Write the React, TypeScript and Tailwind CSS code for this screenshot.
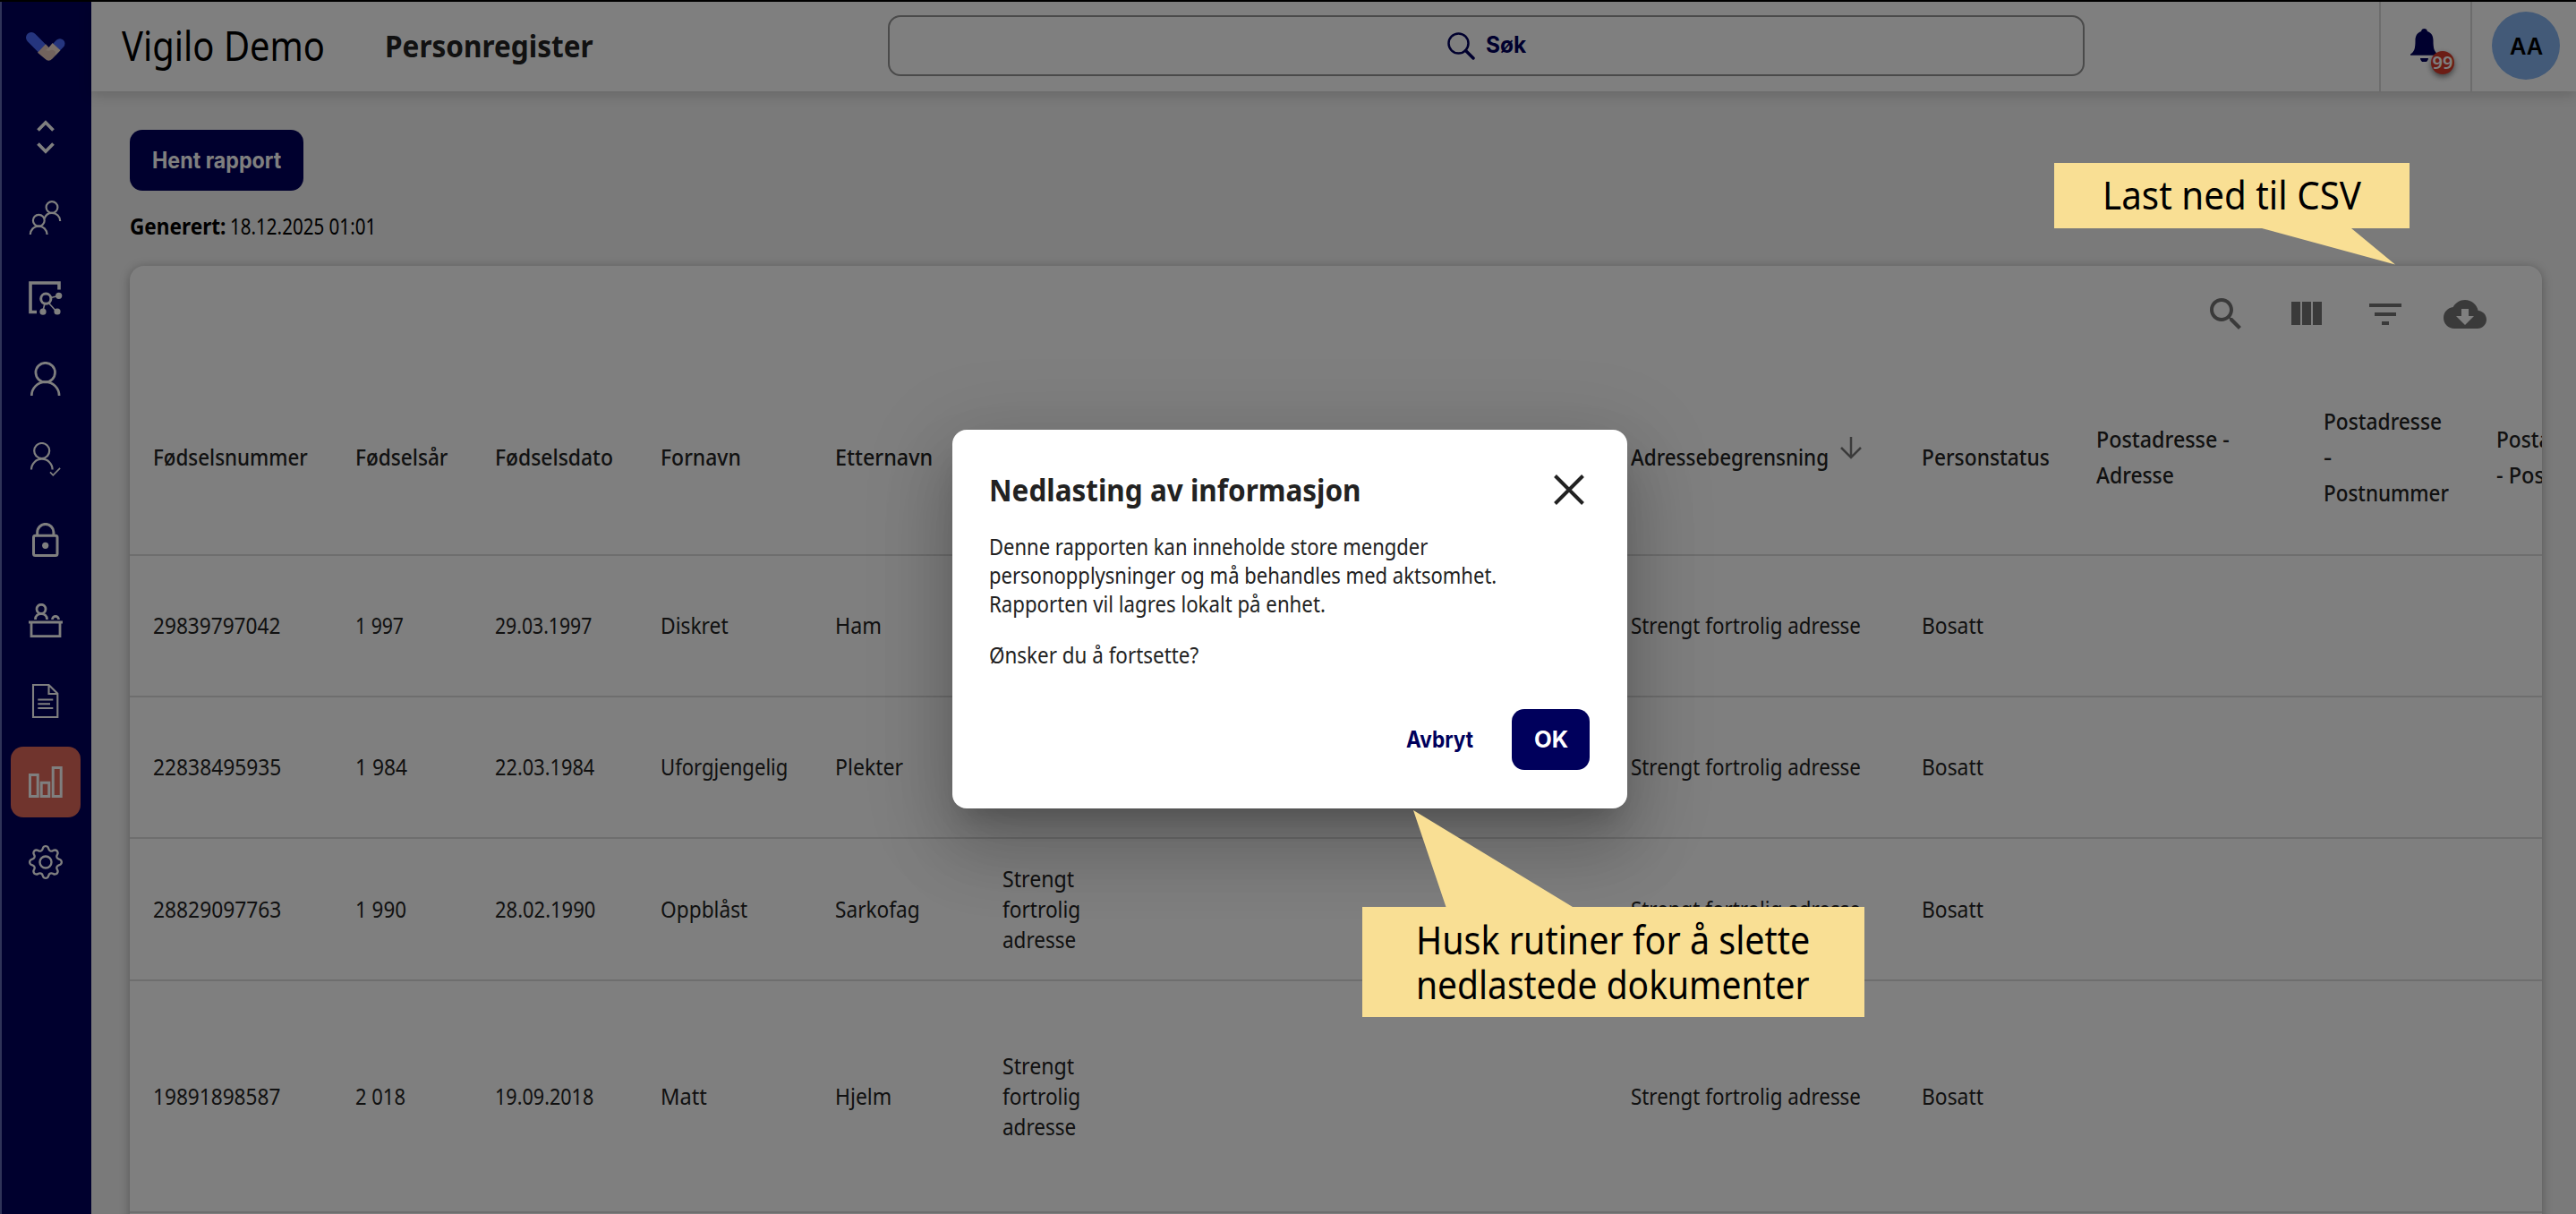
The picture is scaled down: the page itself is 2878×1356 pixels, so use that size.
import { useLayoutEffect, useRef, useState, type ReactNode } from "react";
import { BsGear } from "react-icons/bs";

/* One line of text condensed horizontally to a given width. */
function Fit({ w, className = "", children }: { w: number; className?: string; children: ReactNode }) {
  const ref = useRef<HTMLSpanElement>(null);
  const [scale, setScale] = useState(0.88);
  useLayoutEffect(() => {
    if (ref.current) setScale(w / ref.current.offsetWidth);
  }, [w]);
  return (
    <span className={"block whitespace-nowrap " + className} style={{ width: w }}>
      <span ref={ref} className="inline-block origin-left" style={{ transform: `scaleX(${scale})` }}>
        {children}
      </span>
    </span>
  );
}

function Icon({ children }: { children: ReactNode }) {
  return (
    <svg className="size-[38px]" viewBox="0 0 38 38" fill="none" stroke="currentColor">
      {children}
    </svg>
  );
}

const navIcons: ReactNode[] = [
  <Icon>
    <g strokeWidth="2.2">
      <circle cx="26" cy="7.5" r="6.4" />
      <circle cx="11.3" cy="22.3" r="6.4" />
      <path d="M1.8 38a9.4 9.4 0 0 1 18.8 0M17.6 20.4c1.2-4 4.4-6.5 8.4-6.5 5.2 0 9.2 4 9.2 9" />
    </g>
  </Icon>,
  <Icon>
    <path strokeWidth="3.6" d="M34 9.500V2H2v32.500h7" />
    <circle cx="19.300" cy="19.700" r="5.600" strokeWidth="3" />
    <path strokeWidth="1.600" d="M25 18.500l8-2M18 25l-2 8M22.500 24.500l9 10" />
    <g fill="currentColor" stroke="none">
      <circle cx="33.700" cy="16.300" r="3.600" />
      <circle cx="16" cy="34.200" r="3.600" />
      <circle cx="32" cy="34" r="3.600" />
    </g>
  </Icon>,
  <Icon>
    <g strokeWidth="2.700">
      <circle cx="18.700" cy="12.100" r="10.800" />
      <path d="M3.300 38a15.400 15.400 0 0 1 30.800 0" />
    </g>
  </Icon>,
  <Icon>
    <circle cx="14.700" cy="9.500" r="8.500" strokeWidth="2.200" />
    <path strokeWidth="2.200" d="M3 30.500a11.800 11.800 0 0 1 23.600 0" />
    <path strokeWidth="1.700" d="M24 33.300l3.300 3.500 7.800-8" />
  </Icon>,
  <Icon>
    <rect x="5.500" y="14.300" width="26.500" height="22.200" rx="2" strokeWidth="3" />
    <path strokeWidth="3" d="M9.700 14v-3.500a9 9 0 0 1 18.200 0V14" />
    <circle cx="18.700" cy="25.300" r="3.600" fill="currentColor" stroke="none" />
  </Icon>,
  <Icon>
    <g strokeWidth="2.800">
      <circle cx="14" cy="6.300" r="5" />
      <path d="M7.500 18c0-8.600 13-8.600 13 0M26.500 18c0-4.800 7-4.800 7 0M0 21h38M3 22v14.700h32V22" />
    </g>
  </Icon>,
  <Icon>
    <g strokeWidth="2.1">
      <path d="M5 1h17.500l9.800 9.800V37H5zM22.500 1v10h9.800M10.300 17.500h17M10.300 22.300H24M10.300 27h17" />
    </g>
  </Icon>,
  <Icon>
    <path strokeWidth="3" d="M1.500 11.500h8.700v24H1.500zM14.200 20.200h8.600v15.300h-8.600zM27.200 3.500h9v32h-9z" />
  </Icon>,
  <BsGear className="size-[38px]" />,
];

function Sidebar() {
  return (
    <nav className="flex w-[102px] shrink-0 flex-col items-center border-l-2 border-[#5e66b0] bg-[#00005c] pr-[2px] text-white">
      <div className="flex h-[100px] items-center pl-[2px]">
        <svg className="h-[52px] w-[64px]" viewBox="0 0 192 156" fill="none">
          <path d="M45 48L95 98" stroke="#4a6afc" strokeWidth="36" strokeLinecap="round" />
          <path d="M141 68L108 102" stroke="#4a6afc" strokeWidth="33" strokeLinecap="round" />
          <path d="M66 98L93 70l11 11 12-14 26 24-27 28q-12 12-24 0z" fill="#e4c6ba" />
          <path d="M104 81l12-14 26 24-17 17 1-13q-10-9-20-3-6 1-13-1z" fill="#f6e0d2" />
        </svg>
      </div>
      <div className="flex h-[96px] flex-col items-center pt-[32px]">
        <svg className="h-[38px] w-[20px]" viewBox="0 0 20 38" fill="none" stroke="white" strokeWidth="3.700">
          <path d="M1.500 11.500L10 2.800l8.500 8.700M1.500 26.500l8.500 8.700 8.500-8.700" />
        </svg>
      </div>
      {navIcons.map((icon, i) => (
        <div key={i} className="flex h-[90px] items-center">
          <div className={i === 7 ? "flex h-[79px] w-[78px] items-center justify-center rounded-[14px] bg-[#e0685a]" : "flex w-[78px] items-center justify-center"}>
            {icon}
          </div>
        </div>
      ))}
    </nav>
  );
}

function Header() {
  return (
    <header className="relative flex h-[100px] shrink-0 items-center bg-white shadow-[0_4px_14px_rgba(0,0,0,0.16)]">
      <Fit w={227} className="-mt-[2px] ml-[34px] text-[45px] leading-[60px] text-black">Vigilo Demo</Fit>
      <Fit w={233} className="-mt-[2px] ml-[67px] text-[34.5px] leading-[54px] font-bold text-[#222]">Personregister</Fit>
      <div className="-mt-[2px] ml-[329px] flex h-[68px] w-[1337px] items-center justify-center gap-3 rounded-[14px] border-2 border-[#949494] text-[#00005c]">
        <svg className="size-[31px]" viewBox="0 0 31 31" fill="none" stroke="currentColor">
          <circle cx="12.500" cy="12.500" r="11" strokeWidth="2.500" />
          <path d="M20.500 20.500l8.500 8.500" strokeWidth="3.500" strokeLinecap="round" />
        </svg>
        <Fit w={45} className="font-[Inter,sans-serif] text-[25px] font-bold">Søk</Fit>
      </div>
      <div className="ml-[329px] flex h-full w-[104px] items-center justify-center border-x-2 border-[#d8d8d8]">
        <div className="relative mr-[3px] -mt-[3px]">
          <svg className="h-[37px] w-[31px]" viewBox="0 0 31 37" fill="#00005c">
            <path d="M15.500 0c-2 0-3.200 1.300-3.400 3C7 4.500 5.500 9 5.500 13c0 9-1 13-5.500 15.500v1.200h31v-1.200c-4.500-2.500-5.500-6.500-5.500-15.500 0-4-1.500-8.500-6.600-10-.2-1.700-1.400-3-3.400-3zM11 33h9a4.500 4.500 0 0 1-9 0z" />
          </svg>
          <div className="absolute top-[25px] left-[23px] flex size-[26px] items-center justify-center rounded-full bg-[#d83a2b] text-[20px] leading-none font-semibold text-white shadow-[0_3px_6px_rgba(0,0,0,0.5)]">
            99
          </div>
        </div>
      </div>
      <div className="-mt-[2px] ml-[22px] flex size-[76px] items-center justify-center rounded-full bg-[#86b4f0] text-black">
        <Fit w={37} className="font-[Inter,sans-serif] text-[26px] font-semibold">AA</Fit>
      </div>
    </header>
  );
}

type Line = [string, number];

const headers: Line[][] = [
  [["Fødselsnummer", 173]],
  [["Fødselsår", 103]],
  [["Fødselsdato", 132]],
  [["Fornavn", 90]],
  [["Etternavn", 109]],
  [],
  [["Adressebegrensning", 221]],
  [["Personstatus", 143]],
  [["Postadresse -", 149], ["Adresse", 87]],
  [["Postadresse", 132], ["-", 9], ["Postnummer", 140]],
  [["Postadresse", 132], ["- Poststed", 112]],
];

const strengt: Line[] = [["Strengt", 80], ["fortrolig", 87], ["adresse", 82]];

const rows: { height: string; cells: Line[][] }[] = [
  {
    height: "h-[158px]",
    cells: [[["29839797042", 142]], [["1 997", 54]], [["29.03.1997", 108]], [["Diskret", 76]], [["Ham", 52]], []],
  },
  {
    height: "h-[158px]",
    cells: [[["22838495935", 143]], [["1 984", 58]], [["22.03.1984", 111]], [["Uforgjengelig", 142]], [["Plekter", 76]], []],
  },
  {
    height: "h-[159px]",
    cells: [[["28829097763", 143]], [["1 990", 57]], [["28.02.1990", 112]], [["Oppblåst", 97]], [["Sarkofag", 95]], strengt],
  },
  {
    height: "h-[259px]",
    cells: [[["19891898587", 142]], [["2 018", 56]], [["19.09.2018", 110]], [["Matt", 52]], [["Hjelm", 63]], strengt],
  },
];

const grid =
  "grid grid-cols-[226px_156px_185px_195px_187px_702px_325px_195px_254px_193px_250px] items-center border-b-2 border-[#dcdcdc] pl-[26px] text-[25.5px] text-[#222]";

function Lines({ lines }: { lines: Line[] }) {
  return (
    <>
      {lines.map(([text, w], i) => (
        <Fit key={i} w={w}>{text}</Fit>
      ))}
    </>
  );
}

const tools = [
  "M15.500 14h-.79l-.28-.27C15.410 12.590 16 11.110 16 9.500 16 5.910 13.090 3 9.500 3S3 5.910 3 9.500 5.910 16 9.500 16c1.610 0 3.090-.59 4.230-1.570l.27.28v.79l5 4.990L20.490 19l-4.990-5zm-6 0C7.010 14 5 11.990 5 9.500S7.010 5 9.500 5 14 7.010 14 9.500 11.990 14 9.500 14z",
  "M10 18h5V5h-5v13zm-6 0h5V5H4v13zM16 5v13h5V5h-5z",
  "M10 18h4v-2h-4v2zM3 6v2h18V6H3zm3 7h12v-2H6v2z",
  "M19.350 10.040C18.670 6.590 15.640 4 12 4 9.110 4 6.600 5.640 5.350 8.040 2.340 8.360 0 10.910 0 14c0 3.310 2.690 6 6 6h13c2.760 0 5-2.240 5-5 0-2.640-2.050-4.780-4.650-4.960zM17 13l-5 5-5-5h3V9h4v4h3z",
];

function Report() {
  return (
    <main className="flex flex-1 flex-col overflow-hidden bg-[#f4f4f4] pl-[43px]">
      <button className="mt-[43px] flex h-[68px] w-[194px] shrink-0 items-center justify-center rounded-[14px] bg-[#00005c] text-white">
        <Fit w={144} className="mt-px font-[Inter,sans-serif] text-[25px] font-bold">Hent rapport</Fit>
      </button>
      <div className="mt-[22px] flex h-[36px] shrink-0 text-[24.500px] leading-[36px] text-black">
        <Fit w={107} className="mr-[5px] font-bold">Generert:</Fit>
        <Fit w={163}>18.12.2025 01:01</Fit>
      </div>
      <section className="mt-[26px] flex h-[1080px] w-[2695px] shrink-0 flex-col overflow-hidden rounded-t-[16px] bg-white shadow-[0_2px_12px_rgba(0,0,0,0.3)]">
        <div className="flex h-[107px] shrink-0 items-center justify-end gap-[41px] pr-[62px]">
          {tools.map((d, i) => (
            <svg key={i} viewBox="0 0 24 24" className="size-[48px] fill-[#757575]">
              <path d={d} />
            </svg>
          ))}
        </div>
        <div className={grid + " h-[217px] shrink-0 pb-[4px] leading-[40px] font-medium"}>
          {headers.map((lines, i) => (
            <div key={i} className={i === 6 ? "flex items-center gap-[13px]" : undefined}>
              <Lines lines={lines} />
              {i === 6 && (
                <svg className="-mt-[18px] h-[25px] w-[24px]" viewBox="0 0 24 25" fill="none" stroke="#777" strokeWidth="2.500">
                  <path d="M12 0v23M1 12l11 11 11-11" />
                </svg>
              )}
            </div>
          ))}
        </div>
        {rows.map((row, r) => (
          <div key={r} className={grid + " shrink-0 pb-[2px] leading-[34px] " + row.height}>
            {row.cells.map((lines, i) => (
              <div key={i}>
                <Lines lines={lines} />
              </div>
            ))}
            <Fit w={257}>Strengt fortrolig adresse</Fit>
            <Fit w={69}>Bosatt</Fit>
          </div>
        ))}
      </section>
    </main>
  );
}

function Dialog() {
  return (
    <div className="absolute top-[480px] left-[1064px] flex h-[423px] w-[754px] flex-col rounded-[16px] bg-white px-[42px] text-[#222] shadow-[0_22px_30px_-14px_rgba(0,0,0,0.2),0_48px_76px_6px_rgba(0,0,0,0.14),0_18px_92px_16px_rgba(0,0,0,0.12)]">
      <div className="mt-[40px] flex h-[54px] items-center justify-between">
        <Fit w={416} className="-ml-px text-[34.500px] leading-[54px] font-bold">Nedlasting av informasjon</Fit>
        <svg className="mr-[6px] size-[34px]" viewBox="0 0 34 34" stroke="#222" strokeWidth="4">
          <path d="M1.500 1.500l31 31M32.500 1.500l-31 31" />
        </svg>
      </div>
      <div className="mt-[20px] -ml-px text-[25px] leading-[32px]">
        <Fit w={490}>Denne rapporten kan inneholde store mengder</Fit>
        <Fit w={567}>personopplysninger og må behandles med aktsomhet.</Fit>
        <Fit w={376}>Rapporten vil lagres lokalt på enhet.</Fit>
        <Fit w={234} className="mt-[25px]">Ønsker du å fortsette?</Fit>
      </div>
      <div className="mt-[45px] flex items-center justify-end gap-[43px] font-[Inter,sans-serif] text-[25px] font-bold">
        <Fit w={75} className="mt-px text-[#00005c]">Avbryt</Fit>
        <button className="flex h-[68px] w-[87px] items-center justify-center rounded-[14px] bg-[#00005c] text-white">
          <Fit w={38} className="mt-px">OK</Fit>
        </button>
      </div>
    </div>
  );
}

function Callouts() {
  return (
    <>
      <div className="absolute top-[182px] left-[2295px] flex h-[73px] w-[397px] items-center justify-center bg-[#f9df94] pb-[3px] text-[44px] leading-[50px] text-black">
        <Fit w={289}>Last ned til CSV</Fit>
        <svg className="absolute top-[72px] left-[232px] h-[42px] w-[150px]" viewBox="0 0 150 42" fill="#f9df94">
          <path d="M0 0V1L149 41.500 100 1V0z" />
        </svg>
      </div>
      <div className="absolute top-[1013px] left-[1522px] flex h-[123px] w-[561px] flex-col bg-[#f9df94] pt-[11px] pl-[60px] text-[44px] leading-[50px] text-black">
        <Fit w={440}>Husk rutiner for å slette</Fit>
        <Fit w={440}>nedlastede dokumenter</Fit>
        <svg className="absolute -top-[108px] left-[57px] h-[109px] w-[179px]" viewBox="0 0 179 109" fill="#f9df94">
          <path d="M0 0l36.500 108v1H178v-1z" />
        </svg>
      </div>
    </>
  );
}

export default function App() {
  return (
    <div className="relative flex h-[1356px] w-[2878px] overflow-hidden border-t-2 border-black font-['Noto_Sans',sans-serif]">
      <Sidebar />
      <div className="flex min-w-0 flex-1 flex-col">
        <Header />
        <Report />
      </div>
      <div className="absolute inset-0 bg-black/50" />
      <div className="absolute inset-x-0 -top-[2px] h-[1356px]">
        <Dialog />
        <Callouts />
      </div>
    </div>
  );
}
